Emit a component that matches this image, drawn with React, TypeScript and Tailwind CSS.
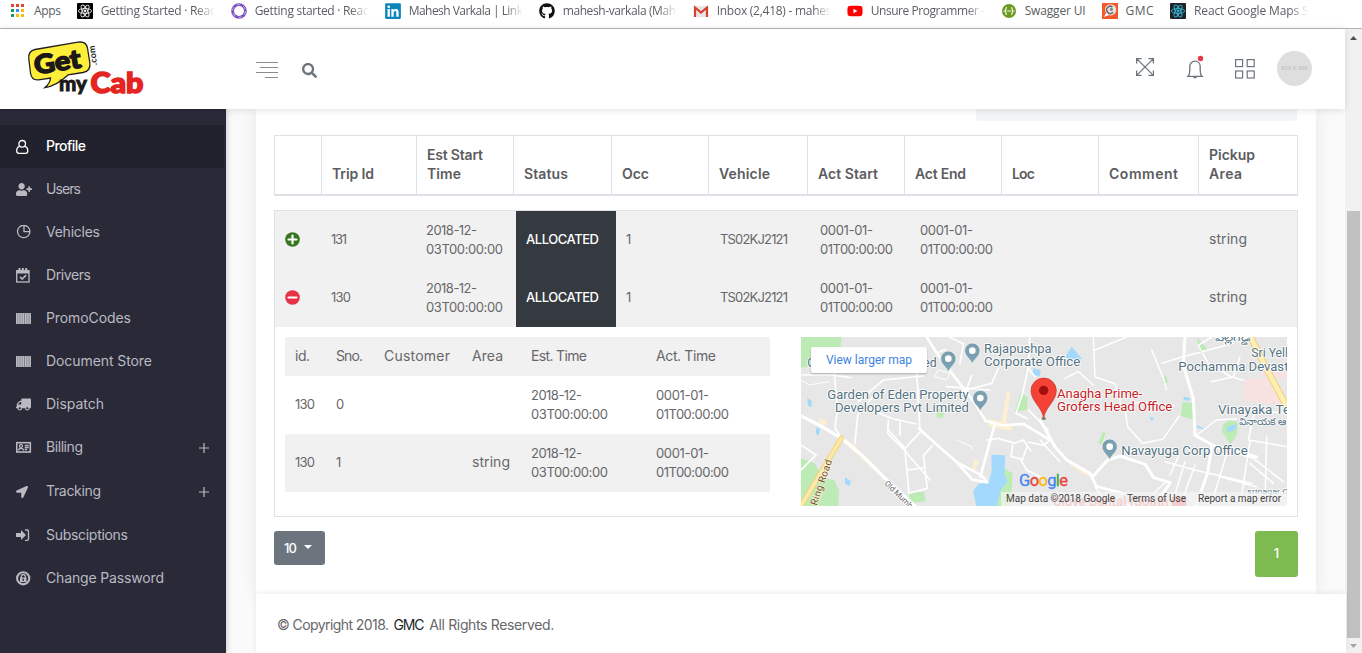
import { useLayoutEffect, useRef, useState, type ReactNode } from "react";
import { FaGithub, FaLinkedin, FaLocationArrow, FaSearch, FaTruck, FaUserPlus, FaYoutube } from "react-icons/fa";

/* Text tracked so that it takes up the given advance width. */
function Fit({ w, children, className = "" }: { w: number; children: string; className?: string }) {
  const ref = useRef<HTMLSpanElement>(null);
  const [spacing, setSpacing] = useState(0);
  useLayoutEffect(() => {
    if (ref.current) {
      const natural = ref.current.getBoundingClientRect().width;
      setSpacing(children.length > 1 ? (w - natural) / (children.length - 1) : 0);
    }
  }, [w, children]);
  return (
    <span className={`block w-max whitespace-pre ${className}`}>
      <span ref={ref} style={{ letterSpacing: spacing }}>{children}</span>
    </span>
  );
}

/* ---------- bookmarks ---------- */

function ReactMark({ bg, fg }: { bg: string; fg: string }) {
  return (
    <svg width="16" height="16" viewBox="0 0 16 16">
      <rect width="16" height="16" rx="1" fill={bg} />
      <g fill="none" stroke={fg} strokeWidth="0.9">
        <ellipse cx="8" cy="8" rx="6.6" ry="2.5" />
        <ellipse cx="8" cy="8" rx="6.6" ry="2.5" transform="rotate(60 8 8)" />
        <ellipse cx="8" cy="8" rx="6.6" ry="2.5" transform="rotate(120 8 8)" />
      </g>
      <circle cx="8" cy="8" r="1.4" fill={fg} />
    </svg>
  );
}

function AppsMark() {
  const colors = ["#ea4335", "#ea4335", "#ea4335", "#0f9d58", "#4285f4", "#fbbc05", "#0f9d58", "#fbbc05", "#fbbc05"];
  return (
    <svg width="16" height="16" viewBox="0 0 16 16">
      {colors.map((c, i) => (
        <rect key={i} x={1 + (i % 3) * 5} y={1 + Math.floor(i / 3) * 5} width="3" height="3" fill={c} />
      ))}
    </svg>
  );
}

const bookmarks: { icon: ReactNode; text: string; w: number; cut?: boolean }[] = [
  { icon: <AppsMark />, text: "Apps", w: 27 },
  { icon: <ReactMark bg="#000" fg="#e8e8e8" />, text: "Getting Started · React", w: 119, cut: true },
  {
    icon: (
      <svg width="16" height="16" viewBox="0 0 16 16">
        <circle cx="8" cy="8" r="6.4" fill="none" stroke="#764abc" strokeWidth="2.8" />
        <circle cx="8" cy="8" r="6.4" fill="none" stroke="#c9b6ea" strokeWidth="1" strokeDasharray="4 2.7" />
      </svg>
    ),
    text: "Getting started · React", w: 118, cut: true,
  },
  {
    icon: <FaLinkedin className="size-[18px] -mx-px text-[#0a86bd]" />,
    text: "Mahesh Varkala | LinkedIn", w: 137, cut: true,
  },
  { icon: <FaGithub className="size-4 text-[#111]" />, text: "mahesh-varkala (Mahesh", w: 132, cut: true },
  {
    icon: (
      <svg width="16" height="16" viewBox="0 0 16 16">
        <rect x="1" y="3" width="14" height="11" fill="#e6e6e6" />
        <path d="M2 14V4.5l6 5 6-5V14" fill="none" stroke="#d6402f" strokeWidth="2.2" />
      </svg>
    ),
    text: "Inbox (2,418) - mahesh", w: 122, cut: true,
  },
  { icon: <FaYoutube className="size-4 text-[#f00]" />, text: "Unsure Programmer - Yo", w: 130, cut: true },
  {
    icon: (
      <svg width="16" height="16" viewBox="0 0 16 16">
        <circle cx="8" cy="8" r="7" fill="#6a9b1f" />
        <path d="M6 4.5c-1.6 0-1 2-1.3 2.7-.2.6-.9.8-.9.8s.7.2.9.8c.3.7-.3 2.7 1.3 2.7M10 4.5c1.6 0 1 2 1.3 2.7.2.6.9.8.9.8s-.7.2-.9.8c-.3.7.3 2.7-1.3 2.7M6.3 8h3.6" fill="none" stroke="#fff" strokeWidth="1.2" />
      </svg>
    ),
    text: "Swagger UI", w: 61,
  },
  {
    icon: (
      <svg width="16" height="16" viewBox="0 0 16 16">
        <rect width="16" height="16" fill="#f4592b" />
        <circle cx="8.6" cy="6.8" r="5.6" fill="#e9e6e2" />
        <path d="M2 14l2-4 3 2z" fill="#fff" />
        <path d="M10.500 4a3.600 3.600 0 1 0 .500 5.300" fill="none" stroke="#666" strokeWidth="1.500" />
        <circle cx="9.400" cy="6.400" r="1.600" fill="#888" />
      </svg>
    ),
    text: "GMC", w: 28,
  },
  { icon: <ReactMark bg="#20232a" fg="#35b5d0" />, text: "React Google Maps St", w: 119, cut: true },
];

function BookmarkBar() {
  return (
    <div className="flex h-[29px] shrink-0 items-start gap-4 border-b border-[#b4b4b4] bg-white pt-[3px] pl-[10px] font-['Open_Sans','Noto_Sans',sans-serif] text-[12px] leading-4 text-[#5a5d62]">
      {bookmarks.map((b) => (
        <div key={b.text} className="flex shrink-0 gap-2">
          <span className="flex size-4 shrink-0 items-center justify-center">{b.icon}</span>
          {b.cut ? (
            <div className="w-[114px] overflow-hidden [mask-image:linear-gradient(to_right,black_84%,transparent)]">
              <Fit w={b.w}>{b.text}</Fit>
            </div>
          ) : (
            <Fit w={b.w}>{b.text}</Fit>
          )}
        </div>
      ))}
    </div>
  );
}

/* ---------- header ---------- */

function Logo() {
  return (
    <svg width="120" height="58" viewBox="0 0 120 58" className="font-['Lato',sans-serif]">
      <path
        d="M8 9.5L51 2.2Q59 1 60.5 8l2.3 14.5Q64 31 56 32.5l-15 2.4Q29 46 18 47.5q5-4 5.5-9.5l-12 1.8Q4.500 40.500 3.500 33L1.800 19Q1 10.800 8 9.500z"
        fill="#fdee3a" stroke="#231f20" strokeWidth="1.300"
      />
      <g fontWeight="900">
        <text x="8.500" y="34.500" fontSize="26" textLength="47" lengthAdjust="spacingAndGlyphs" transform="rotate(-9 9 34)" fill="#1c1818" stroke="#1c1818" strokeWidth="1.400">Get</text>
        <text x="32" y="51" fontSize="20" textLength="28" lengthAdjust="spacingAndGlyphs" fill="#1c1818" stroke="#1c1818" strokeWidth="0.800">my</text>
        <text x="63.500" y="52.500" fontSize="28" textLength="53" lengthAdjust="spacingAndGlyphs" fill="#e52521" stroke="#e52521" strokeWidth="1.500">Cab</text>
      </g>
      <text x="0" y="0" fontSize="9" fontWeight="700" textLength="20" transform="translate(70 25) rotate(-97)" fill="#231f20">.com</text>
    </svg>
  );
}

function Header() {
  return (
    <header className="relative z-20 flex h-20 shrink-0 items-start bg-white shadow-[0_1px_8px_rgba(0,0,0,0.12)]">
      <div className="w-[256px] pt-[11px] pl-[27px]"><Logo /></div>
      <svg className="mt-[32px]" width="22" height="18" viewBox="0 0 22 18" fill="none" stroke="#868e8e">
        <path d="M0 1.500h22M4 6.500h18M0 11.500h22M9 16.500h13" strokeWidth="1.200" />
      </svg>
      <FaSearch className="mt-[34px] ml-[24px] size-[15px] text-[#6c757d]" />
      <div className="ml-auto flex pr-[33px] text-[#6c757d]">
        <svg className="mt-[29px]" width="18" height="18" viewBox="0 0 18 18" fill="none" stroke="currentColor" strokeWidth="1.300">
          <path d="M.600 5.500V.600h5M12.400.600h5v5M17.400 12.400v5h-5M5.600 17.400h-5v-5M.600.600l16.800 16.800M17.400.600L.600 17.400" />
        </svg>
        <svg className="mt-[25px] ml-[32px]" width="18" height="25" viewBox="0 0 18 25" fill="none" stroke="currentColor" strokeWidth="1.300">
          <path d="M.800 22.300H17.200M2.500 22c1-1.700 1.300-3 1.300-6v-3.500c0-3 2.200-5.300 5.200-5.300s5.200 2.300 5.200 5.300V16c0 3 .300 4.300 1.300 6M7.400 23.700h3.200" />
          <circle cx="14.500" cy="4.500" r="2.700" fill="#e63946" stroke="none" />
        </svg>
        <svg className="mt-[30px] ml-[31px]" width="20" height="20" viewBox="0 0 20 20" fill="none" stroke="currentColor" strokeWidth="1.200">
          <rect x=".6" y=".6" width="7" height="7" /><rect x="12.200" y=".6" width="7" height="7" />
          <rect x=".6" y="12" width="7" height="7" /><rect x="12.200" y="12" width="7" height="7" />
        </svg>
        <div className="mt-[22px] ml-[22px] flex size-[35px] items-center justify-center rounded-full bg-[#dedede] font-['Open_Sans',sans-serif] text-[6px] font-bold text-[#c6c6c6]">
          <Fit w={27}>624 X 596</Fit>
        </div>
      </div>
    </header>
  );
}

/* ---------- sidebar ---------- */

const line = { fill: "none", stroke: "currentColor", strokeWidth: 1.3 };

function Barcode() {
  return (
    <svg width="16" height="16" viewBox="0 0 16 16" fill="currentColor">
      <rect y="2" width="15" height="11" opacity="0.6" />
      {[0, 2.2, 4.5, 6.6, 9, 11.2, 13.5].map((x) => (
        <rect key={x} x={x} y="2" width="1.400" height="11" />
      ))}
    </svg>
  );
}

const nav: { text: string; w: number; icon: ReactNode; more?: boolean }[] = [
  {
    text: "Profile", w: 40,
    icon: <svg width="16" height="16" viewBox="0 0 16 16" {...line}><circle cx="6.200" cy="4.800" r="3.300" /><path d="M3.500 7.400C1.500 8 .700 9.500.700 12c0 1.600.800 2.400 2.300 2.400h6.500c1.500 0 2.300-.800 2.300-2.400 0-2.500-.800-4-2.900-4.600" /></svg>,
  },
  { text: "Users", w: 35, icon: <FaUserPlus className="h-[13px] w-4" /> },
  {
    text: "Vehicles", w: 54,
    icon: <svg width="16" height="16" viewBox="0 0 16 16" {...line}><circle cx="7.700" cy="6.500" r="6.200" /><path d="M8 .500v6.200h6" /></svg>,
  },
  {
    text: "Drivers", w: 45,
    icon: <svg width="16" height="16" viewBox="0 0 16 16" {...line}><rect x=".7" y="2.700" width="12.300" height="11.300" /><path d="M.700 4h12.300" strokeWidth="3" /><path d="M3.500 0v3.500M6.800 0v3M10.200 0v3.500" strokeWidth="2" /><path d="M4 8.700l2.200 2.300 4-4" strokeWidth="1.600" /></svg>,
  },
  { text: "PromoCodes", w: 85, icon: <Barcode /> },
  { text: "Document Store", w: 106, icon: <Barcode /> },
  { text: "Dispatch", w: 58, icon: <FaTruck className="h-[13px] w-[15px] -scale-x-100" /> },
  {
    text: "Billing", w: 37, more: true,
    icon: <svg width="16" height="16" viewBox="0 0 16 16" {...line}><rect x=".7" y="2.700" width="13.600" height="9.300" strokeWidth="1.600" /><circle cx="5" cy="5.900" r="1.500" /><path d="M2.500 10.600c0-3 5-3 5 0M8.700 5.500h4M8.700 7.500h4M8.700 9.500h2.500" /></svg>,
  },
  { text: "Tracking", w: 55, more: true, icon: <FaLocationArrow className="size-[12px]" /> },
  {
    text: "Subsciptions", w: 82,
    icon: <svg width="16" height="16" viewBox="0 0 16 16"><path d="M0 5h5V2l5 5-5 5V9H0z" fill="currentColor" /><path d="M9 2h2q1.500 0 1.500 1.500v7.500q0 1.300-1.500 1.300H9" {...line} /></svg>,
  },
  {
    text: "Change Password", w: 118,
    icon: <svg width="16" height="16" viewBox="0 0 16 16"><circle cx="7.200" cy="7.300" r="6.100" fill="none" stroke="currentColor" strokeWidth="2.100" /><path d="M4 6.500h6.500v4.500H4z" fill="currentColor" /><path d="M5.300 7V5.500a2 2 0 0 1 4 0V7" {...line} /><rect x="6.500" y="7.700" width="1.500" height="2" fill="#292938" /></svg>,
  },
];

function Sidebar() {
  return (
    <aside className="z-10 w-[226px] shrink-0 bg-[#292938] pt-4 shadow-[1px_0_5px_rgba(0,0,0,0.2)]">
      {nav.map((n, i) => (
        <div
          key={n.text}
          className={`flex items-center pl-4 text-[14px] ${n.more ? "h-11 pb-px" : "h-[43px]"} ${i === 0 ? "mr-0.5 bg-[#20212c] font-medium text-white" : "text-[#babac0]"}`}
        >
          <span className="flex w-[30px]">{n.icon}</span>
          <Fit w={n.w} className="pb-0.5">{n.text}</Fit>
          {n.more && (
            <svg className="mr-[17px] ml-auto" width="10" height="10" viewBox="0 0 10 10" stroke="currentColor" strokeWidth="1.200"><path d="M0 5h10M5 0v10" /></svg>
          )}
        </div>
      ))}
    </aside>
  );
}

/* ---------- map ---------- */

function Pin({ x, y }: { x: number; y: number }) {
  return (
    <g transform={`translate(${x} ${y})`}>
      <path d="M0 36C-4 20-23 12-23-5a23 23 0 0 1 46 0C23 12 4 20 0 36z" fill="#7a9fb0" stroke="#fff" strokeWidth="2" />
      <circle cy="-5" r="10" fill="#fff" />
    </g>
  );
}

function Label({ x, y, w, children, color = "#54727f", size = 38 }: { x: number; y: number; w: number; children: string; color?: string; size?: number }) {
  return (
    <text x={x} y={y} textLength={w} lengthAdjust="spacingAndGlyphs" fontSize={size} fill={color} stroke="#fff" strokeWidth="5" strokeLinejoin="round" paintOrder="stroke">
      {children}
    </text>
  );
}

function StreetMap() {
  return (
    <div className="relative h-[169px] w-[486px] overflow-hidden bg-[#e7e7e7] font-['Roboto',sans-serif]">
      <svg width="486" height="169" viewBox="0 0 486 169">
        {/* west half */}
        <g transform="translate(-11 -7) scale(0.33333)">
          <g fill="#bdebb5">
            <path d="M33 21h122l-6 50-86-8v45l-30 5zM33 385l40 15 28 45 32 5 14 30-2 48H33zM692 190l22 12-4 38-35 5zM357 490l45-5 4 28-50 8zM440 236h20v26l-20 2zM640 415l28 15-6 98h-70z" />
          </g>
          <g fill="#a3d9fc">
            <path d="M604 374l42 2-3 58 10 18-22 30-10 46h-62l-10-45 16-20 32-10 8-30zM52 205l14 8-2 18-10-4zM78 292l12 6-4 18-8-4zM165 442l18 12-4 14-14-6zM730 115l22 5-2 18-22-2z" />
          </g>
          <g fill="#fcefd2"><path d="M165 330l30 15 15 25 55 45-12 8-85-80zM595 265l40 10 15-90 12 4-14 92 20 10-4 12-65-12zM552 388l16 6-12 28-10-5zM90 265l20 8v14l-24-8z" /></g>
          <g fill="none" stroke="#fff" strokeLinejoin="round" strokeLinecap="round">
            <path d="M33 258l60 30 62 37 60 50 65 65 95 88" strokeWidth="10" />
            <path d="M410 21l30 48 60 80 58 75 28 48 50 14 65-4 76 46M386 295l55 50 60 52 75 40 16 20-45-8-45-50M615 280l-22 80-22 80" strokeWidth="8" />
            <path d="M33 135h90l60 8M155 325l-20-30 8-60-10-100 18-70M195 340l8-85 50-60M205 215l75-65 120-12M380 130l5 80 5 90M230 235l80 32 70 15M295 270l-2 40 60 60M345 360l12 130M345 355l45-48M400 375l12 100-54 14M350 420l50-6M402 375l25-28M355 375l65 75M330 270v45M345 355l-50-55M590 330l35-5 50 15 25-10 22 32M668 345l-5 35 35 8 12-36M690 385l20 35 40 20M780 330l-20 16-45-10M715 240l60 60M735 140l-20-25 4-94M478 21l42 20-10 60M440 69l25-10M33 345l45 30-45 45M545 135l-15 45 75-20 20-45M470 170l130 10M715 112l-17 78-20 60 35 16" strokeWidth="5" />
            <path d="M445 120l35 10-10 20-35-10zM500 330l45 20v10M33 150l25 15 60-10" strokeWidth="3" />
          </g>
          <path d="M154 325l-37 62-84 141" stroke="#f3cf73" strokeWidth="16" strokeLinecap="round" fill="none" />
          <path d="M154 325l-37 62-84 141" stroke="#fce8a8" strokeWidth="11" strokeLinecap="round" fill="none" />
          <text x="0" y="0" transform="translate(80 528) rotate(-71)" fontSize="30" textLength="143" fill="#6f4d2c" stroke="#fff8dc" strokeWidth="4" paintOrder="stroke">Ring Road</text>
          <text x="0" y="0" transform="translate(282 462) rotate(44)" fontSize="24" textLength="107" fill="#666" stroke="#fff" strokeWidth="5" paintOrder="stroke">Old Mumb</text>
        </g>
        {/* east half */}
        <g transform="translate(239 -7) scale(0.33333)">
          <path d="M612 150l75-8 54 85-60-7-68-5zM655 135l86 12v-30h-60z" fill="#f8e1e1" />
          <g fill="#bdebb5"><path d="M428 215l32 5 2 50-40-12zM548 285l20-14 26 6-4 38-18 28-26-38zM175 340l14-36 8 4-12 36zM367 142l14-4 2 20-14 4zM470 21l35 40-25 6z" /></g>
          <g fill="#a3d9fc"><path d="M75 82l20-32 32 38-40-2zM432 200l18 4-2 8-18-2zM328 262h14l-6 12zM560 290l30-8-8 20-20 4zM470 285l30 14-28-6z" /></g>
          <path d="M95 395l60 35 2 10-20-4-55-38z" fill="#fcefd2" />
          <g fill="none" stroke="#fff" strokeLinejoin="round" strokeLinecap="round">
            <path d="M0 270l45 80 35 40 70 40 20 40 80 20M158 440l45-50 38-12 75 25 25 40 50 15-35 50M435 21l-5 85 30 100 5 110 55 30 130 35M515 350l-12 78-35 100" strokeWidth="9" />
            <path d="M160 21l5 120 60 20 20 70 55-15 100 12M165 60l95-39M255 235l8 55 45 50 60-12 50-70M365 100l65-20 150-40M335 60l35 85 10 35M515 21l-40 25 30 55 70 40 36 10M600 80l-20 60-65 15M375 395l90 25 170 40M415 380l-25 55M435 395l-40 130M465 405l-45 125M530 355l110 30 90 70M630 335l-30 190M680 320l-5 200M545 420l-30 100M560 370l-20 70 110 30M630 400l70 60M0 330l60 65M160 165l-45-40-40 20M470 315l60-45 60-4M735 250l-90-10-20 90 116 20M165 470l35 50 100 8 80-75" strokeWidth="4.500" />
          </g>
          <path d="M632 21l42 85 67 125" stroke="#f3cf73" strokeWidth="20" fill="none" />
          <path d="M632 21l42 85 67 125" stroke="#fdeeb5" strokeWidth="14" fill="none" />
          <g fill="#ec6b6b" fontSize="38">
            <text x="40" y="527" textLength="345" stroke="#ec6b6b">Clove Dental (South</text>
            <rect x="395" y="500" width="44" height="28" rx="6" />
          </g>
          <Label x={524} y={32} w={105} size={30}>పల్లెగడ్డ</Label>
          <Label x={634} y={82} w={130}>Sri Yella</Label>
          <Label x={415} y={122} w={395}>Pochamma Devasthan</Label>
          <Label x={534} y={252} w={252}>Vinayaka Tem</Label>
          <Label x={597} y={286} w={165} size={30}>వినాయక ఆల</Label>
          <Label x={622} y={491} w={160} size={24}>srinagar Colo</Label>
          <Pin x={209} y={355} />
          <Label x={244} y={376} w={379}>Navayuga Corp Office</Label>
          <Label x={51} y={205} w={256} color="#c5221f">Anagha Prime-</Label>
          <Label x={51} y={244} w={346} color="#c5221f">Grofers Head Office</Label>
        </g>
        <g transform="translate(-11 -7) scale(0.33333)">
          <Label x={52} y={112} w={388}>Gowra Fountain Limited</Label>
          <Pin x={475} y={91} />
          <Pin x={547} y={67} />
          <Pin x={571} y={209} />
          <Label x={582} y={70} w={203}>Rajapushpa</Label>
          <Label x={582} y={109} w={289}>Corporate Office</Label>
          <Label x={112} y={208} w={424}>Garden of Eden Property</Label>
          <Label x={135} y={247} w={402}>Developers Pvt Limited</Label>
          <ellipse cx="761" cy="266" rx="7" ry="4" fill="#888" />
          <path d="M761 266c-3-34-38-52-38-84a38 38 0 0 1 76 0c0 32-35 50-38 84z" fill="#f44336" stroke="#c5332a" strokeWidth="2" />
          <circle cx="761" cy="181" r="14" fill="#a50e0e" />
        </g>
        <text x="218" y="149" fontSize="16.5" textLength="49" strokeWidth="0.3">
          <tspan fill="#4285f4" stroke="#4285f4">G</tspan><tspan fill="#ea4335" stroke="#ea4335">o</tspan><tspan fill="#fbbc05" stroke="#fbbc05">o</tspan><tspan fill="#4285f4" stroke="#4285f4">g</tspan><tspan fill="#34a853" stroke="#34a853">l</tspan><tspan fill="#ea4335" stroke="#ea4335">e</tspan>
        </text>
      </svg>
      <div className="absolute right-0 bottom-0 flex h-[14px] items-center bg-[#f5f5f5]/70 pr-1.5 pl-[5px] text-[10px] leading-[14px] text-[#444]">
        <Fit w={109}>Map data ©2018 Google</Fit>
        <Fit w={59} className="ml-3">Terms of Use</Fit>
        <Fit w={83} className="ml-3">Report a map error</Fit>
      </div>
      <div className="absolute top-[10px] left-[10px] flex h-[26px] w-[116px] items-center justify-center rounded-xs bg-white text-[12px] text-[#3a84df] shadow-[0_1px_2px_rgba(0,0,0,0.25)]">
        <Fit w={86}>View larger map</Fit>
      </div>
    </div>
  );
}

/* ---------- trips table ---------- */

type Line = [string, number];

function Lines({ items }: { items: Line[] }) {
  return (
    <>
      {items.map(([t, w]) => (
        <Fit key={t} w={w} className={/^[A-Z]?[a-z]/.test(t) ? "-mt-px mb-px text-[14px]" : ""}>{t}</Fit>
      ))}
    </>
  );
}

const headCells: Line[][] = [
  [], [["Trip Id", 42]], [["Est Start", 56], ["Time", 34]], [["Status", 44]], [["Occ", 27]], [["Vehicle", 51]],
  [["Act Start", 60]], [["Act End", 51]], [["Loc", 23]], [["Comment", 69]], [["Pickup", 46], ["Area", 33]],
];

const estTime: Line[] = [["2018-12-", 51], ["03T00:00:00", 77]];
const actTime: Line[] = [["0001-01-", 53], ["01T00:00:00", 73]];

function StatusIcon({ open }: { open: boolean }) {
  return (
    <svg width="15" height="15" viewBox="0 0 15 15">
      <circle cx="7.500" cy="7.500" r="7.300" fill={open ? "#e63244" : "#35761f"} />
      <path d={open ? "M3.500 7.500h8" : "M3.500 7.500h8M7.500 3.500v8"} stroke="#fff" strokeWidth="2.200" strokeLinecap="round" />
    </svg>
  );
}

function TripRow({ id, idWidth, open }: { id: string; idWidth: number; open: boolean }) {
  const cells: Line[][] = [[[id, idWidth]], estTime, [["ALLOCATED", 73]], [["1", 4]], [["TS02KJ2121", 68]], actTime, actTime, [], [], [["string", 38]]];
  return (
    <div className="grid h-[58px] grid-cols-[46px_95px_100px_100px_94px_100px_100px_94px_95px_100px_98px] bg-[#f1f1f1]">
      <div className="flex items-center pb-0.5 pl-2.5"><StatusIcon open={open} /></div>
      {cells.map((c, i) => (
        <div key={i} className={`flex flex-col justify-center pl-2.5 ${c.length === 1 ? "pb-px" : ""} ${i === 2 ? "bg-[#343a40] font-medium text-white" : ""}`}>
          <Lines items={c} />
        </div>
      ))}
    </div>
  );
}

const stopRows: { cells: Line[][]; tall: boolean }[] = [
  { tall: false, cells: [[["id.", 15]], [["Sno.", 27]], [["Customer", 66]], [["Area", 31]], [["Est. Time", 56]], [["Act. Time", 60]]] },
  { tall: true, cells: [[["130", 20]], [["0", 8]], [], [], estTime, actTime] },
  { tall: true, cells: [[["130", 20]], [["1", 4]], [], [["string", 38]], estTime, actTime] },
];

function Trips() {
  return (
    <>
      <div className="grid h-[61px] grid-cols-[47px_95px_97px_98px_97px_99px_97px_97px_97px_100px_100px] border border-b-2 border-[#dee2e6] font-semibold text-[#5c5c60]">
        {headCells.map((c, i) => (
          <div key={i} className={`flex flex-col justify-end pb-2.5 ${i < 10 ? "border-r border-[#dee2e6]" : ""} ${i > 0 ? "pl-2.5" : ""}`}>
            <Lines items={c} />
          </div>
        ))}
      </div>
      <div className="mt-3.5 h-[307px] border border-[#dee2e6]">
        <TripRow id="131" idWidth={16} open={false} />
        <TripRow id="130" idWidth={20} open />
        <div className="flex items-start justify-between p-2.5">
          <div className="w-[485px]">
            {stopRows.map((r, i) => (
              <div key={i} className={`grid grid-cols-[41px_48px_88px_59px_125px_124px] ${r.tall ? "h-[58px]" : "h-[39px]"} ${i % 2 ? "" : "bg-[#f1f1f1]"}`}>
                {r.cells.map((c, k) => (
                  <div key={k} className={`flex flex-col justify-center pl-2.5 ${r.tall && c.length === 1 ? "pb-px" : ""}`}><Lines items={c} /></div>
                ))}
              </div>
            ))}
          </div>
          <StreetMap />
        </div>
      </div>
      <div className="mt-3.5 flex items-start justify-between font-medium text-white">
        <div className="flex h-[34px] w-[51px] items-center rounded-[3px] bg-[#6c757d] pl-2.5">
          <Fit w={13}>10</Fit>
          <svg className="mb-0.5 ml-2" width="8" height="4" viewBox="0 0 8 4" fill="currentColor"><path d="M0 0h8L4 4z" /></svg>
        </div>
        <div className="flex h-[46px] w-[43px] items-center justify-center rounded-[3px] bg-[#7dba4f] pb-0.5">1</div>
      </div>
    </>
  );
}

function Scrollbar() {
  return (
    <div className="flex w-[17px] flex-col items-center bg-[#f1f1f1]">
      <svg className="mt-[7px]" width="7" height="4" viewBox="0 0 7 4"><path d="M0 4h7L3.500 0z" fill="#505050" /></svg>
      <div className="mt-[171px] h-[427px] w-[13px] bg-[#c1c1c1]" />
      <svg className="mt-[6px]" width="7" height="4" viewBox="0 0 7 4"><path d="M0 0h7L3.500 4z" fill="#a3a3a3" /></svg>
    </div>
  );
}

export default function App() {
  return (
    <div className="flex h-[653px] w-[1362px] flex-col overflow-hidden bg-white font-['Inter',sans-serif] text-[13px] leading-[19px] text-[#67676b]">
      <BookmarkBar />
      <div className="flex min-h-0 flex-1">
        <div className="flex w-[1345px] flex-col">
          <Header />
          <div className="flex min-h-0 flex-1">
            <Sidebar />
            <div className="flex flex-1 flex-col bg-[#fafafa] pl-[30px]">
              <main className="mr-[30px] h-[485px] bg-white px-[18px] shadow-[0_0_16px_rgba(0,0,0,0.08)]">
                <div className="ml-[702px] h-3 w-[321px] rounded-b-[3px] bg-[#f4f5f7]" />
                <div className="w-[1024px] pt-3.5"><Trips /></div>
              </main>
              <footer className="z-10 flex flex-1 items-center bg-white pt-px pl-[21px] text-[14px] shadow-[0_-1px_6px_rgba(0,0,0,0.08)]">
                <Fit w={112}>© Copyright 2018.</Fit>
                <Fit w={31} className="ml-[5px] text-[#212529]">GMC</Fit>
                <Fit w={125} className="ml-1.5">All Rights Reserved.</Fit>
              </footer>
            </div>
          </div>
        </div>
        <Scrollbar />
      </div>
    </div>
  );
}
